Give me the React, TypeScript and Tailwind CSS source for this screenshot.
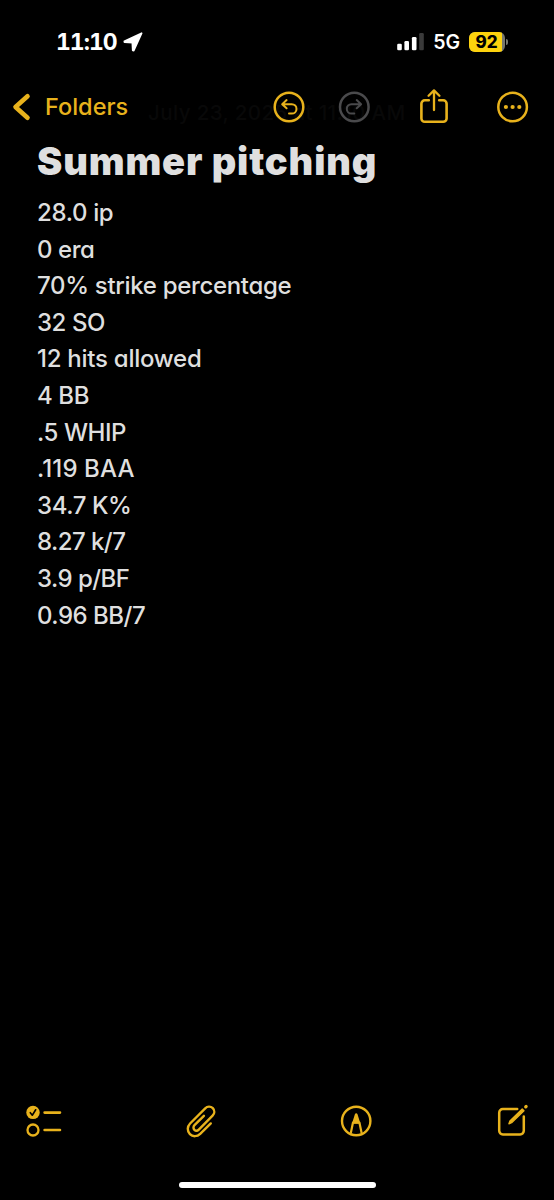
const stats = [
  { text: "28.0 ip", tracking: "tracking-[-0.35px]" },
  { text: "0 era", tracking: "tracking-[-0.45px]" },
  { text: "70% strike percentage", tracking: "tracking-[-0.32px]" },
  { text: "32 SO", tracking: "tracking-[-0.45px]" },
  { text: "12 hits allowed", tracking: "tracking-[-0.26px]" },
  { text: "4 BB", tracking: "tracking-[-0.4px]" },
  { text: ".5 WHIP", tracking: "tracking-[-0.45px]" },
  { text: ".119 BAA", tracking: "tracking-[0.1px]" },
  { text: "34.7 K%", tracking: "tracking-[-0.4px]" },
  { text: "8.27 k/7", tracking: "tracking-[-0.55px]" },
  { text: "3.9 p/BF", tracking: "tracking-[-0.55px]" },
  { text: "0.96 BB/7", tracking: "tracking-[-0.5px]" },
];

function StatusBar() {
  return (
    <div className="flex h-[83px] items-center justify-between pl-[56px] pr-[46px] text-white">
      <div className="flex items-center">
        <span className="w-[67px] pt-px text-[23px] leading-none font-bold tracking-[-1px] tabular-nums">11:10</span>
        <svg className="h-5 w-5" viewBox="0 0 20 20" fill="currentColor" stroke="currentColor" strokeWidth="1.8" strokeLinejoin="round">
          <path d="M18.6 1.2 1.4 9.2 1.5 10.2 9.4 10.6 9.8 18.4 10.8 18.5Z" />
        </svg>
      </div>
      <div className="flex items-center">
        <svg className="mr-[9px] h-[18px] w-[28px]" viewBox="0 0 28 18" fill="currentColor">
          <rect x="1.2" y="10.8" width="4.6" height="6.4" rx="1.3" />
          <rect x="8.4" y="8" width="4.6" height="9.2" rx="1.3" />
          <rect x="15.9" y="4" width="4.6" height="13.2" rx="1.3" />
          <rect x="23.2" y="0" width="4.6" height="17.2" rx="1.3" fill="#3a3a3a" />
        </svg>
        <span className="mr-[9px] pt-[2px] text-[19.5px] leading-none font-semibold">5G</span>
        <div className="flex items-center gap-px">
          <div className="flex h-5 w-[36px] items-center overflow-hidden rounded-[6px] bg-[#77776f]">
            <span className="flex h-5 w-[33px] items-center justify-center bg-[#fdd20d] pt-px pl-[2px] text-[17px] leading-none font-extrabold text-black">
              92
            </span>
          </div>
          <div className="h-[6px] w-[2px] rounded-r-full bg-[#77776f]" />
        </div>
      </div>
    </div>
  );
}

function NavBar() {
  return (
    <div className="relative flex h-[48px] items-center text-[#e8b21c]">
      <span className="absolute top-[15px] left-[148px] text-[20.5px] font-medium tracking-[0.4px] whitespace-nowrap text-[#080808]">
        July 23, 2025 at 11:10 AM
      </span>
      <svg className="relative ml-[12px] h-[30px] w-5" viewBox="0 0 20 30" fill="none" stroke="currentColor" strokeWidth="4.6" strokeLinecap="round" strokeLinejoin="round">
        <path d="M15.5 4.2 3.5 15 15.5 25.8" />
      </svg>
      <span className="relative ml-[13px] w-[228px] text-[23.5px] leading-none font-medium">Folders</span>
      <svg className="relative h-8 w-8" viewBox="0 0 32 32" fill="none" stroke="currentColor" strokeWidth="2.5" strokeLinecap="round" strokeLinejoin="round">
        <circle cx="16" cy="16" r="14.3" />
        <path d="M13.6 9.1 9.2 13.2 13.6 17.3M9.6 13.2H18.8a4.7 4.7 0 0 1 0 9.4H16" strokeWidth="2" />
      </svg>
      <svg className="relative ml-[33px] h-8 w-8 text-[#4a4a4c]" viewBox="0 0 32 32" fill="none" stroke="currentColor" strokeWidth="2.5" strokeLinecap="round" strokeLinejoin="round">
        <circle cx="16.3" cy="16" r="14.3" />
        <path d="M18.7 9.1 23.1 13.2 18.7 17.3M22.7 13.2H13.5a4.7 4.7 0 0 0 0 9.4H16.3" strokeWidth="2" />
      </svg>
      <svg className="relative ml-[49px] h-9 w-[30px]" viewBox="0 0 30 36" fill="none" stroke="currentColor" strokeWidth="2.6" strokeLinecap="round" strokeLinejoin="round">
        <path d="M9.8 11.3H5.8a3.4 3.4 0 0 0-3.4 3.4V29.4a3.4 3.4 0 0 0 3.4 3.4H24.2a3.4 3.4 0 0 0 3.4-3.4V14.7a3.4 3.4 0 0 0-3.4-3.4H20.2" />
        <path d="M15 21V1.6M9.6 6.7 15 1.4 20.4 6.7" strokeWidth="2.3" />
      </svg>
      <svg className="relative ml-[48px] h-8 w-8" viewBox="0 0 32 32" fill="currentColor">
        <circle cx="15.6" cy="16" r="14.3" fill="none" stroke="currentColor" strokeWidth="2.5" />
        <circle cx="8.9" cy="16" r="2.1" />
        <circle cx="15.6" cy="16" r="2.1" />
        <circle cx="22.3" cy="16" r="2.1" />
      </svg>
    </div>
  );
}

function Toolbar() {
  return (
    <div className="flex h-10 items-center text-[#e8b21c]">
      {/* Checklist */}
      <svg className="ml-[25px] h-9 w-[38px]" viewBox="0 0 38 36" fill="none" stroke="currentColor" strokeWidth="2.6" strokeLinecap="round">
        <circle cx="8" cy="9.4" r="6.7" fill="currentColor" stroke="none" />
        <path d="M5.3 9.7 7.3 12.2 10.7 6.8" stroke="#000" strokeWidth="1.6" strokeLinejoin="round" />
        <circle cx="8" cy="27" r="5.5" strokeWidth="2.3" />
        <path d="M19.6 9.6H35M19.6 27H35" />
      </svg>
      {/* Attachment */}
      <svg className="ml-[122px] h-9 w-[34px]" viewBox="0 0 34 36" fill="none" stroke="currentColor" strokeWidth="2.4" strokeLinecap="round" strokeLinejoin="round">
        <path d="M25.8 20.4 15.2 30.9C12.2 33.8 7.8 34 4.9 31.1C2 28.1 2.1 23.6 5.1 20.5L20.2 5.3C22.3 3.2 25.7 3.1 27.8 5.2C29.8 7.3 29.8 10.5 27.6 12.7L13.8 26.6C12.5 27.9 10.6 28 9.4 26.8C8.1 25.5 8.2 23.5 9.5 22.2L18.9 12.8" />
      </svg>
      {/* Markup */}
      <svg className="ml-[121px] h-8 w-8" viewBox="0 0 32 32" fill="none" stroke="currentColor" strokeWidth="2.4" strokeLinejoin="round">
        <circle cx="16.2" cy="16" r="14.2" />
        <path d="M10.8 28 13 17.6H19.4L21.6 28" strokeWidth="2.2" />
        <path d="M12 18.6 14.9 9.2C15.3 7.9 17.1 7.9 17.5 9.2L20.4 18.6Z" fill="currentColor" stroke="none" />
      </svg>
      {/* Compose */}
      <svg className="ml-[125px] h-9 w-8" viewBox="0 0 32 36" fill="none" stroke="currentColor" strokeWidth="2.5" strokeLinecap="round" strokeLinejoin="round">
        <path d="M20.2 6.1H5.8a3.6 3.6 0 0 0-3.6 3.6V27.8a3.6 3.6 0 0 0 3.6 3.6H23.2a3.6 3.6 0 0 0 3.6-3.6V13.6" />
        <path d="M25.2 5.9 27 7.7 14.6 19.7 11.9 20.8 12.9 18Z" fill="currentColor" strokeWidth="1.3" />
        <path d="M28.7 3.9 29.1 3.5" strokeWidth="3.2" />
      </svg>
    </div>
  );
}

export default function App() {
  return (
    <div className="flex h-[1200px] w-[554px] flex-col overflow-hidden bg-black font-['Inter',sans-serif]">
      <StatusBar />
      <NavBar />
      <main className="flex-1 pt-[7px] pl-[37px] text-[#dfdfdf]">
        <h1 className="text-[38px] leading-[46px] font-black tracking-[0.85px] whitespace-nowrap">
          Summer pitching
        </h1>
        <div className="pt-[11px] text-[24px] font-medium [font-feature-settings:'cv11']">
          {stats.map(({ text, tracking }) => (
            <p key={text} className={`h-[36.6px] leading-[36.6px] ${tracking}`}>
              {text}
            </p>
          ))}
        </div>
      </main>
      <Toolbar />
      <div className="flex h-[59px] items-end justify-center pb-[12px]">
        <div className="h-[6px] w-[197px] rounded-full bg-white" />
      </div>
    </div>
  );
}
